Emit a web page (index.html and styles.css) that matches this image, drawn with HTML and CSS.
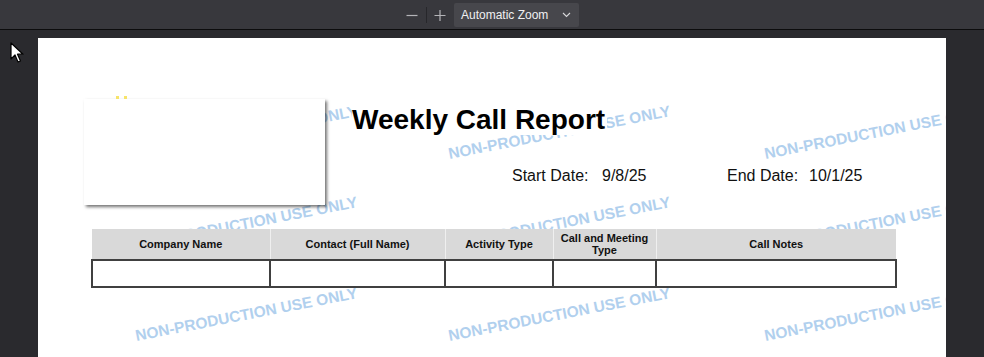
FILE: index.html
```html
<!DOCTYPE html>
<html>
<head>
<meta charset="utf-8">
<title>Weekly Call Report</title>
<link rel="stylesheet" href="styles.css">
</head>
<body>
<div class="toolbar">
  <div class="zoom-controls">
    <button class="tb-btn tb-minus" aria-label="Zoom out"><svg width="12" height="12" viewBox="0 0 12 12"><path d="M0.5 6.5h11" stroke="#b4b4b8" stroke-width="1.2"/></svg></button>
    <span class="tb-sep"></span>
    <button class="tb-btn tb-plus" aria-label="Zoom in"><svg width="12" height="12" viewBox="0 0 12 12"><path d="M0.5 6.5h11M6 1v11" stroke="#b4b4b8" stroke-width="1.2"/></svg></button>
    <div class="zoom-select"><span>Automatic Zoom</span><svg width="9" height="6" viewBox="0 0 9 6"><path d="M1 1l3.5 3.5L8 1" fill="none" stroke="#d8d8da" stroke-width="1.1"/></svg></div>
  </div>
</div>
<div class="viewer">
  <svg class="cursor" width="14" height="21" viewBox="0 0 14 21"><path d="M1 1v16l4-4 3 7 2.5-1-3-6.8h5.5z" fill="#fff" stroke="#000" stroke-width="1.2" stroke-linejoin="round"/></svg>
  <div class="page">
    <div class="watermarks">
      <span class="wm" style="left:99px;top:108px">NON-PRODUCTION USE ONLY</span>
      <span class="wm" style="left:412px;top:108px">NON-PRODUCTION USE ONLY</span>
      <span class="wm" style="left:726px;top:108px">NON-PRODUCTION USE ONLY</span>
      <span class="wm" style="left:99px;top:199px">NON-PRODUCTION USE ONLY</span>
      <span class="wm" style="left:412px;top:199px">NON-PRODUCTION USE ONLY</span>
      <span class="wm" style="left:726px;top:199px">NON-PRODUCTION USE ONLY</span>
      <span class="wm" style="left:99px;top:290px">NON-PRODUCTION USE ONLY</span>
      <span class="wm" style="left:412px;top:290px">NON-PRODUCTION USE ONLY</span>
      <span class="wm" style="left:726px;top:290px">NON-PRODUCTION USE ONLY</span>
    </div>
    <div class="content">
      <div class="top">
        <div class="logo-box">
          <div class="logo-marks"><i></i><i></i></div>
        </div>
        <div class="heading">
          <h1 class="title">Weekly Call Report</h1>
          <div class="dates">
            <span class="d-label d-start">Start Date:</span>
            <span class="d-value d-start-val">9/8/25</span>
            <span class="d-label d-end">End Date:</span>
            <span class="d-value">10/1/25</span>
          </div>
        </div>
      </div>
      <table class="report">
        <colgroup>
          <col class="c1"><col class="c2"><col class="c3"><col class="c4"><col class="c5">
        </colgroup>
        <thead>
          <tr>
            <th>Company Name</th>
            <th>Contact (Full Name)</th>
            <th>Activity Type</th>
            <th>Call and Meeting<br>Type</th>
            <th>Call Notes</th>
          </tr>
        </thead>
        <tbody>
          <tr><td></td><td></td><td></td><td></td><td></td></tr>
        </tbody>
      </table>
    </div>
  </div>
</div>
</body>
</html>
```
FILE: styles.css
```css
* { box-sizing: border-box; }
html, body { margin: 0; padding: 0; }
body {
  width: 984px;
  height: 357px;
  overflow: hidden;
  background: #2a2a2e;
  font-family: "Liberation Sans", Arial, sans-serif;
}
.toolbar {
  height: 30px;
  background: #38383d;
  border-bottom: 1px solid #0c0c0d;
  display: flex;
  justify-content: center;
}
.zoom-controls {
  display: flex;
  align-items: center;
  margin-left: -7px;
  padding-top: 1px;
  height: 28px;
}
.tb-btn {
  background: none;
  border: 0;
  padding: 0;
  height: 24px;
  display: flex;
  align-items: center;
  justify-content: center;
}
.tb-minus { width: 28px; }
.tb-plus { width: 26px; }
.tb-sep {
  width: 1px;
  height: 16px;
  background: #27272b;
}
.zoom-select {
  margin-left: 1px;
  width: 125px;
  height: 24px;
  background: #47474c;
  border-radius: 2px;
  color: #f0f0f2;
  font-size: 12px;
  display: flex;
  align-items: center;
  justify-content: space-between;
  padding: 0 8px 0 7px;
}
.viewer {
  position: relative;
  padding: 8px 0 0 38px;
}
.cursor {
  position: absolute;
  left: 10px;
  top: 12px;
}
.page {
  position: relative;
  width: 908px;
  height: 330px;
  background: #fff;
  overflow: hidden;
}
.watermarks {
  position: absolute;
  inset: 0;
}
.wm {
  position: absolute;
  white-space: nowrap;
  font-weight: bold;
  font-size: 15.5px;
  line-height: 16px;
  color: #b1d0ee;
  transform-origin: 0 100%;
  transform: rotate(-11deg);
}
.wm:nth-child(3n) { margin-left: 2px; }
.content {
  position: relative;
  padding: 61px 0 0 46px;
}
.top {
  display: flex;
}
.logo-box {
  position: relative;
  width: 241px;
  height: 106px;
  background: #fff;
  box-shadow: 2px 2px 3px rgba(0, 0, 0, 0.55);
}
.logo-marks {
  position: absolute;
  left: 32px;
  top: -3px;
  display: flex;
  gap: 5px;
}
.logo-marks i {
  display: block;
  width: 3px;
  height: 3px;
  background: #f7e46a;
}
.heading {
  margin-left: 27px;
  padding-top: 5px;
}
.title {
  margin: 0;
  font-size: 28px;
  line-height: 31px;
  font-weight: bold;
  color: #000;
  background: #fff;
  display: inline-block;
  padding-right: 2px;
}
.dates {
  display: flex;
  margin-top: 31px;
  margin-left: 160px;
  font-size: 16px;
  line-height: 20px;
  color: #111;
}
.d-start { width: 90px; }
.d-start-val { width: 125px; }
.d-end { width: 82px; }
.report {
  margin: 24px 0 0 7px;
  width: 804px;
  border-collapse: collapse;
  table-layout: fixed;
}
.c1 { width: 178px; }
.c2 { width: 175px; }
.c3 { width: 108px; }
.c4 { width: 103px; }
.c5 { width: 240px; }
.report th {
  background: #d9d9d9;
  height: 31px;
  padding: 0 2px;
  font-size: 11px;
  line-height: 12px;
  font-weight: bold;
  color: #111;
  text-align: center;
  vertical-align: middle;
  border-left: 1px solid #efefef;
}
.report th:first-child { border-left: 0; }
.report td {
  height: 27px;
  background: #fff;
  border: 2px solid #404040;
}
```
